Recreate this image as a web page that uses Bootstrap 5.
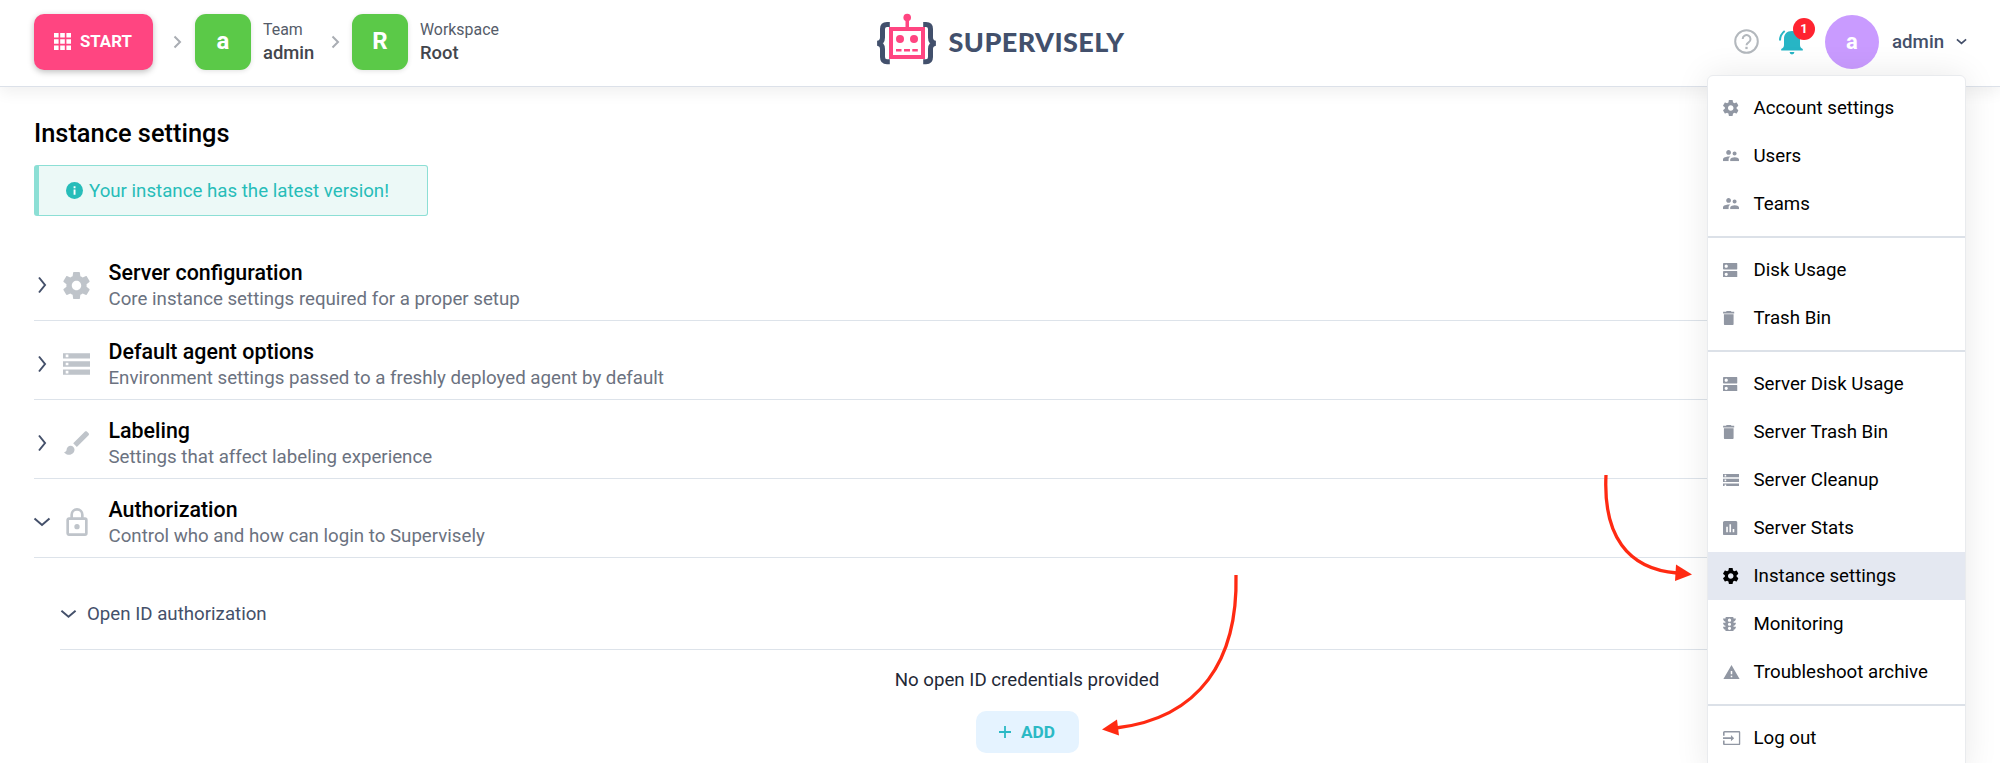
<!DOCTYPE html>
<html lang="en">
<head>
<meta charset="utf-8">
<title>Instance settings</title>
<link rel="stylesheet" href="https://cdn.jsdelivr.net/npm/bootstrap@5.3.0/dist/css/bootstrap.min.css">
<style>
body{font-family:Roboto,"Liberation Sans",sans-serif;font-size:18.7px;line-height:24px;color:#1f2937;background:#fff;height:763px;overflow:hidden;position:relative}
svg{display:block;flex:none}
.topbar{height:87px;border-bottom:1px solid #dce1e9;box-shadow:0 6px 14px rgba(0,0,0,.06);padding:0 33px 3px 34px;position:relative}
.start-btn{width:119px;height:56px;margin-top:1px;border-radius:10px;background:#ff4581;box-shadow:0 2px 6px rgba(0,0,0,.25);font-size:16.8px;font-weight:700;padding:0 0 2px 20px;gap:9px;color:#fff}
.tile{width:56px;height:56px;border-radius:11px;background:#5bc948;box-shadow:0 1px 5px rgba(0,0,0,.12);color:#fff;font-weight:700;font-size:24px;padding-bottom:1px}
.crumb{font-size:15.9px;line-height:23px;color:#555c69;white-space:nowrap;padding-bottom:2px}
.crumb b{display:block;font-weight:500;font-size:18.4px;color:#43464c}
.brand-mark{left:872px;top:8px}
.avatar{width:54px;height:54px;background:#c99bff;color:#fff;font-weight:700;font-size:22px}
.bell-count{left:14px;top:-11px;width:22px;height:22px;background:#ff2330;color:#fff;font-size:13px;font-weight:700}
.page-title{font-size:25.4px;line-height:30px;font-weight:500;color:#000;margin:31px 0 17px}
.version{width:394px;height:51px;border:1px solid #8cdfd5;border-left-width:5px;border-radius:3px;background:#ecf9f7;color:#27bdb9;padding-left:27px;gap:6px}
.section-row{height:78.8px;border-bottom:1px solid #dde3ea;padding-top:8px}
.section-row h2{font-size:21.4px;line-height:26px;font-weight:500;color:#000;margin:2px 0 0}
.section-row p{margin:0;color:#6b7280;font-size:18.72px;line-height:26px}
.fold{width:16px}
.glyph{width:27px;margin:0 18.5px 0 13px;color:#bfc4ca}
.slate{color:#44506a}
.sub-row{margin-left:26px;height:92px;border-bottom:1px solid #dde3ea;padding-top:21px;gap:10px}
.add-btn{width:103px;height:42px;border-radius:10px;background:#e5f3ff;color:#2bb9c5;font-size:17.3px;font-weight:700;gap:10px}
.user-menu{left:1706.5px;top:75px;width:259px;height:700px;background:#fff;border:1px solid #e9ebee;border-radius:6px;box-shadow:0 0 34px rgba(0,0,0,.09);padding-top:8px}
.user-menu a{display:flex;align-items:center;height:48px;color:#000;text-decoration:none;padding-left:15.5px;white-space:nowrap}
.user-menu a i{width:30.5px;color:#9197a3}
.user-menu a.current{background:#e4e8f1}
.user-menu a.current i{color:#000}
.user-menu hr{margin:8px 0;border:0;border-top:2px solid #dce1e8;opacity:1}
</style>
</head>
<body>
<svg width="0" height="0" class="position-absolute">
<symbol id="gear" viewBox="2.2 2 19.6 20"><path fill="currentColor" d="M19.43 12.98c.04-.32.07-.64.07-.98s-.03-.66-.07-.98l2.11-1.65c.19-.15.24-.42.12-.64l-2-3.46c-.12-.22-.39-.3-.61-.22l-2.49 1c-.52-.4-1.08-.73-1.69-.98l-.38-2.65C14.46 2.18 14.25 2 14 2h-4c-.25 0-.46.18-.49.42l-.38 2.65c-.61.25-1.17.59-1.69.98l-2.49-1c-.23-.09-.49 0-.61.22l-2 3.46c-.13.22-.07.49.12.64l2.11 1.65c-.04.32-.07.65-.07.98s.03.66.07.98l-2.11 1.65c-.19.15-.24.42-.12.64l2 3.46c.12.22.39.3.61.22l2.49-1c.52.4 1.08.73 1.69.98l.38 2.65c.03.24.24.42.49.42h4c.25 0 .46-.18.49-.42l.38-2.65c.61-.25 1.17-.59 1.69-.98l2.49 1c.23.09.49 0 .61-.22l2-3.46c.12-.22.07-.49-.12-.64l-2.11-1.65zM12 15.5c-1.93 0-3.5-1.57-3.5-3.5s1.57-3.5 3.5-3.5 3.5 1.57 3.5 3.5-1.57 3.5-3.5 3.5z"/></symbol>
<symbol id="people" viewBox="2 5 20 14"><path fill="currentColor" d="M16.5 12c1.38 0 2.49-1.12 2.49-2.5S17.88 7 16.5 7 14 8.12 14 9.5s1.12 2.5 2.5 2.5zM9 11c1.66 0 2.99-1.34 2.99-3S10.66 5 9 5 6 6.34 6 8s1.34 3 3 3zm7.5 3c-1.83 0-5.5.92-5.5 2.75V19h11v-2.25c0-1.83-3.67-2.75-5.5-2.75zM9 13c-2.33 0-7 1.17-7 3.5V19h7v-2.25c0-.85.33-2.34 2.37-3.47C10.5 13.1 9.66 13 9 13z"/></symbol>
<symbol id="disk" viewBox="3 3 18 18"><path fill="currentColor" d="M20 13H4c-.55 0-1 .45-1 1v6c0 .55.45 1 1 1h16c.55 0 1-.45 1-1v-6c0-.55-.45-1-1-1zM7 19c-1.1 0-2-.9-2-2s.9-2 2-2 2 .9 2 2-.9 2-2 2zM20 3H4c-.55 0-1 .45-1 1v6c0 .55.45 1 1 1h16c.55 0 1-.45 1-1V4c0-.55-.45-1-1-1zM7 9c-1.1 0-2-.9-2-2s.9-2 2-2 2 .9 2 2-.9 2-2 2z"/></symbol>
<symbol id="trash" viewBox="5 3 14 18"><path fill="currentColor" d="M6 19c0 1.1.9 2 2 2h8c1.1 0 2-.9 2-2V7H6v12zM19 4h-3.5l-1-1h-5l-1 1H5v2h14V4z"/></symbol>
<symbol id="storage" viewBox="2 4 20 16"><path fill="currentColor" d="M2 20h20v-4H2v4zm2-3h2v2H4v-2zM2 4v4h20V4H2zm4 3H4V5h2v2zm-4 7h20v-4H2v4zm2-3h2v2H4v-2z"/></symbol>
<symbol id="stats" viewBox="3 3 18 18"><path fill="currentColor" d="M19 3H5c-1.100 0-2 .9-2 2v14c0 1.100.9 2 2 2h14c1.100 0 2-.9 2-2V5c0-1.100-.9-2-2-2zM9 17H7v-7h2v7zm4 0h-2V7h2v10zm4 0h-2v-4h2v4z"/></symbol>
<symbol id="traffic" viewBox="4 3 16 18"><path fill="currentColor" d="M20 10h-3V8.860c1.720-.45 3-2 3-3.860h-3V4c0-.55-.45-1-1-1H8c-.55 0-1 .45-1 1v1H4c0 1.860 1.280 3.410 3 3.860V10H4c0 1.860 1.280 3.410 3 3.860V15H4c0 1.860 1.280 3.410 3 3.860V20c0 .55.45 1 1 1h8c.55 0 1-.45 1-1v-1.140c1.720-.45 3-2 3-3.860h-3v-1.140c1.720-.45 3-2 3-3.860zm-8 9c-1.110 0-2-.9-2-2s.89-2 2-2c1.100 0 2 .9 2 2s-.89 2-2 2zm0-5c-1.110 0-2-.9-2-2s.89-2 2-2c1.100 0 2 .9 2 2s-.89 2-2 2zm0-5c-1.110 0-2-.9-2-2 0-1.110.89-2 2-2 1.100 0 2 .89 2 2 0 1.100-.89 2-2 2z"/></symbol>
<symbol id="warn" viewBox="1 2 22 19"><path fill="currentColor" d="M1 21h22L12 2 1 21zm12-3h-2v-2h2v2zm0-4h-2v-4h2v4z"/></symbol>
<symbol id="leave" viewBox="1 3 22 18"><path fill="currentColor" d="M21 3.010H3c-1.100 0-2 .9-2 2V9h2V4.990h18v14.030H3V15H1v4.010c0 1.100.9 1.980 2 1.980h18c1.100 0 2-.88 2-1.980v-14c0-1.110-.9-2-2-2zM11 16l4-4-4-4v3H1v2h10v3z"/></symbol>
<symbol id="brush" viewBox="2 3 19 18"><path fill="currentColor" d="M7 14c-1.660 0-3 1.340-3 3 0 1.310-1.160 2-2 2 .92 1.220 2.490 2 4 2 2.210 0 4-1.790 4-4 0-1.660-1.340-3-3-3zm13.710-9.370l-1.340-1.340c-.39-.39-1.020-.39-1.410 0L9 12.250 11.750 15l8.960-8.960c.39-.39.39-1.020 0-1.410z"/></symbol>
<symbol id="padlock" viewBox="4 1 16 21"><path fill="currentColor" d="M12 17a2 2 0 1 1 0-4 2 2 0 0 1 0 4M18 20V10H6V20H18M18 8A2 2 0 0 1 20 10V20A2 2 0 0 1 18 22H6C4.890 22 4 21.100 4 20V10C4 8.890 4.890 8 6 8H7V6A5 5 0 0 1 17 6V8H18M12 3A3 3 0 0 0 9 6V8H15V6A3 3 0 0 0 12 3Z"/></symbol>
<symbol id="right" viewBox="0 0 10 18"><path d="M2 1.500L8 9l-6 7.500" fill="none" stroke="currentColor" stroke-width="2"/></symbol>
<symbol id="down" viewBox="0 0 18 10"><path d="M1.500 1.500L9 8l7.500-6.500" fill="none" stroke="currentColor" stroke-width="2"/></symbol>
<symbol id="sep" viewBox="0 0 9 14"><path d="M1.500 1.500L7 7l-5.500 5.500" fill="none" stroke="#a9adb3" stroke-width="2"/></symbol>
</svg>

<header class="topbar d-flex align-items-center justify-content-between">
  <div class="d-flex align-items-center">
    <button class="start-btn border-0 d-flex align-items-center">
      <svg width="17" height="17" viewBox="0 0 17 17" fill="#fff"><path d="M0 0h4.600v4.600H0zM6.200 0h4.600v4.600H6.200zM12.400 0H17v4.600h-4.600zM0 6.200h4.600v4.600H0zM6.200 6.200h4.600v4.600H6.200zM12.400 6.200H17v4.600h-4.600zM0 12.400h4.600V17H0zM6.200 12.400h4.600V17H6.200zM12.400 12.400H17V17h-4.600z"/></svg>
      START
    </button>
    <svg width="9" height="14" style="margin:0 13px 0 20px"><use href="#sep"/></svg>
    <div class="tile d-flex align-items-center justify-content-center">a</div>
    <div class="crumb" style="margin-left:12px;width:68px">Team<b>admin</b></div>
    <svg width="9" height="14" style="margin-right:12px"><use href="#sep"/></svg>
    <div class="tile d-flex align-items-center justify-content-center">R</div>
    <div class="crumb" style="margin-left:12px">Workspace<b>Root</b></div>
  </div>
  <svg class="brand-mark position-absolute" width="260" height="60" viewBox="872 8 260 60">
    <g fill="none" stroke="#42506c" stroke-width="5"><path d="M889.800 24.500h-2.800q-4.500 0-4.500 4.500v8.500q0 5-5 5.800q5 .8 5 5.800V57q0 4.800 4.500 4.800h2.800"/><path d="M923.200 24.500h2.800q4.500 0 4.500 4.500v8.500q0 5 5 5.800q-5 .8-5 5.800V57q0 4.800-4.500 4.800h-2.800"/></g>
    <rect x="891" y="29" width="32" height="28" fill="#fff" stroke="#ff4581" stroke-width="4"/>
    <g fill="#ff4581"><circle cx="907.200" cy="17.500" r="3.800"/><path d="M905.500 19h3.500v9h-3.500zM896 49h5.500v2.600H896zM904 49h6v2.600h-6zM912.300 49h5.500v2.600h-5.500z"/><circle cx="900" cy="39" r="4"/><circle cx="914" cy="39" r="4"/></g>
    <text x="948.500" y="52" font-family="Lato" font-weight="900" font-size="27" fill="#42506c" textLength="175.500" lengthAdjust="spacing">SUPERVISELY</text>
  </svg>
  <div class="d-flex align-items-center">
    <svg width="25" height="25" viewBox="0 0 25 25" fill="none" stroke="#b3b8bd" stroke-width="2"><circle cx="12.500" cy="12.500" r="11.300"/><path d="M8.700 10a3.900 3.900 0 1 1 5.900 3.300c-1.400.9-2.100 1.500-2.100 3"/><path d="M12.500 17.800v2.300" stroke-width="2.300"/></svg>
    <div class="position-relative" style="margin:0 21px 0 20px">
      <svg width="25" height="26" viewBox="0 0 25 26" fill="#27b5c5"><path d="M13 2c5.500 0 8 3.500 8 8v6c0 2 1 3 2.800 4v1.500H2.200V20c1.800-1 2.800-2 2.800-4v-6c0-4.500 2.500-8 8-8zM10.600 23h4.800a2.400 2.400 0 0 1-4.800 0z"/><path d="M1 11.500c0-4 1.500-7 4.700-9.500" fill="none" stroke="#27b5c5" stroke-width="2"/></svg>
      <span class="bell-count position-absolute rounded-circle d-flex align-items-center justify-content-center">1</span>
    </div>
    <div class="avatar rounded-circle d-flex align-items-center justify-content-center">a</div>
    <span class="slate" style="margin-left:13px;width:64px;font-weight:500">admin</span>
    <svg width="11" height="7" viewBox="0 0 18 10"><path d="M1.500 1.500L9 8l7.500-6.500" fill="none" stroke="#44506a" stroke-width="2.800"/></svg>
  </div>
</header>

<main style="padding:0 34px">
  <h1 class="page-title">Instance settings</h1>
  <div class="version d-flex align-items-center">
    <svg width="17" height="17" viewBox="0 0 17 17"><circle cx="8.500" cy="8.500" r="8.500" fill="#27bdb9"/><path d="M7.600 7.500h1.900v5.200H7.600zM7.600 4.200h1.900v2H7.600z" fill="#fff"/></svg>
    <span>Your instance has the latest version!</span>
  </div>
  <div style="margin-top:26.500px">
    <div class="section-row d-flex align-items-center">
      <div class="fold slate d-flex justify-content-center"><svg width="10" height="18"><use href="#right"/></svg></div>
      <div class="glyph d-flex justify-content-center"><svg width="27" height="27"><use href="#gear"/></svg></div>
      <div><h2>Server configuration</h2><p>Core instance settings required for a proper setup</p></div>
    </div>
    <div class="section-row d-flex align-items-center">
      <div class="fold slate d-flex justify-content-center"><svg width="10" height="18"><use href="#right"/></svg></div>
      <div class="glyph d-flex justify-content-center"><svg width="27" height="22"><use href="#storage"/></svg></div>
      <div><h2>Default agent options</h2><p>Environment settings passed to a freshly deployed agent by default</p></div>
    </div>
    <div class="section-row d-flex align-items-center">
      <div class="fold slate d-flex justify-content-center"><svg width="10" height="18"><use href="#right"/></svg></div>
      <div class="glyph d-flex justify-content-center"><svg width="25" height="24"><use href="#brush"/></svg></div>
      <div><h2>Labeling</h2><p>Settings that affect labeling experience</p></div>
    </div>
    <div class="section-row d-flex align-items-center">
      <div class="fold slate d-flex justify-content-center"><svg width="18" height="10"><use href="#down"/></svg></div>
      <div class="glyph d-flex justify-content-center"><svg width="22" height="28"><use href="#padlock"/></svg></div>
      <div><h2>Authorization</h2><p>Control who and how can login to Supervisely</p></div>
    </div>
    <div class="sub-row slate d-flex align-items-center">
      <svg width="17" height="10"><use href="#down"/></svg><span>Open ID authorization</span>
    </div>
    <div class="d-flex flex-column align-items-center" style="padding:18px 0 0 54px">
      <div>No open ID credentials provided</div>
      <button class="add-btn border-0 d-flex align-items-center justify-content-center" style="margin-top:19px"><svg width="12" height="12" viewBox="0 0 12 12"><path d="M6 0v12M0 6h12" stroke="#2bb9c5" stroke-width="1.800"/></svg>ADD</button>
    </div>
  </div>
</main>

<nav class="user-menu position-absolute">
  <a href="#"><i><svg width="15.500" height="16"><use href="#gear"/></svg></i>Account settings</a>
  <a href="#"><i><svg width="16" height="11.200"><use href="#people"/></svg></i>Users</a>
  <a href="#"><i><svg width="16" height="11.200"><use href="#people"/></svg></i>Teams</a>
  <hr>
  <a href="#"><i><svg width="14.500" height="14.500"><use href="#disk"/></svg></i>Disk Usage</a>
  <a href="#"><i><svg width="11.500" height="14.500"><use href="#trash"/></svg></i>Trash Bin</a>
  <hr>
  <a href="#"><i><svg width="14.500" height="14.500"><use href="#disk"/></svg></i>Server Disk Usage</a>
  <a href="#"><i><svg width="11.500" height="14.500"><use href="#trash"/></svg></i>Server Trash Bin</a>
  <a href="#"><i><svg width="16" height="12.800"><use href="#storage"/></svg></i>Server Cleanup</a>
  <a href="#"><i><svg width="14.500" height="14.500"><use href="#stats"/></svg></i>Server Stats</a>
  <a href="#" class="current"><i><svg width="15.500" height="16"><use href="#gear"/></svg></i>Instance settings</a>
  <a href="#"><i><svg width="13" height="14.500"><use href="#traffic"/></svg></i>Monitoring</a>
  <a href="#"><i><svg width="17" height="14.500"><use href="#warn"/></svg></i>Troubleshoot archive</a>
  <hr>
  <a href="#"><i><svg width="17.500" height="14.300"><use href="#leave"/></svg></i>Log out</a>
</nav>

<!-- Callout arrows laid over the page -->
<svg class="position-absolute top-0 start-0 pe-none" width="2000" height="763" fill="none" stroke="#ff2a12" stroke-width="3.300">
  <path d="M1236 575C1238 660 1200 718 1116 728"/><path d="M1606 475C1603 535 1627 569 1677 573"/>
  <g fill="#ff2a12" stroke="none"><path d="M1102 729.500L1117 719.500L1119 735.500z"/><path d="M1692 574.500L1676 564.500L1675 581z"/></g>
</svg>
<script src="https://cdn.jsdelivr.net/npm/bootstrap@5.3.0/dist/js/bootstrap.bundle.min.js"></script>
</body>
</html>
